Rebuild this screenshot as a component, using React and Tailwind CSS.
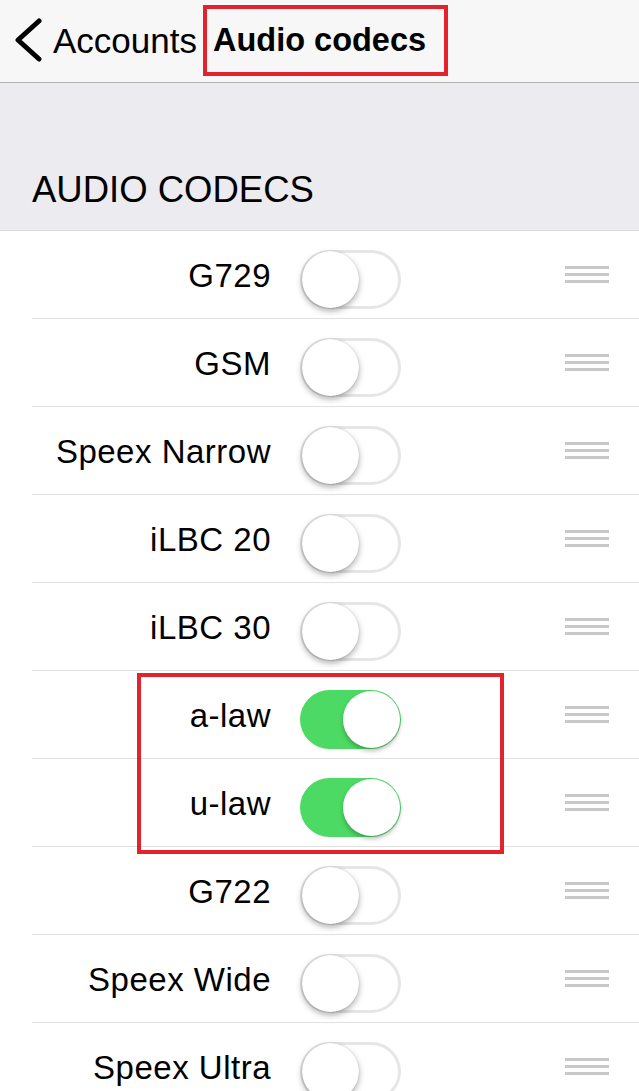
import React from 'react';

const codecs = [
  { name: 'G729', on: false },
  { name: 'GSM', on: false },
  { name: 'Speex Narrow', on: false },
  { name: 'iLBC 20', on: false },
  { name: 'iLBC 30', on: false },
  { name: 'a-law', on: true },
  { name: 'u-law', on: true },
  { name: 'G722', on: false },
  { name: 'Speex Wide', on: false },
  { name: 'Speex Ultra', on: false },
];

const Toggle = ({ on }) =>
  on ? (
    <div className="mt-[10px] w-[101px] h-[59px] rounded-full bg-[#4cd964] flex items-center justify-end pr-[1px] shrink-0">
      <div className="w-[57px] h-[57px] rounded-full bg-white shadow-[0_3px_4px_rgba(0,0,0,0.25)]" />
    </div>
  ) : (
    <div className="mt-[10px] w-[101px] h-[59px] rounded-full border-[3px] border-[#e6e6e6] bg-white flex items-center shrink-0">
      <div className="-ml-[1px] w-[57px] h-[57px] rounded-full bg-white shadow-[0_3px_6px_rgba(0,0,0,0.32),0_0_1px_rgba(0,0,0,0.25)]" />
    </div>
  );

const Handle = () => (
  <div className="w-[44px] flex flex-col gap-[4px] shrink-0">
    <div className="h-[3px] bg-[#c8c8c8]" />
    <div className="h-[3px] bg-[#c8c8c8]" />
    <div className="h-[3px] bg-[#c8c8c8]" />
  </div>
);

export default function App() {
  return (
    <div
      className="relative w-[639px] bg-white text-black"
      style={{ fontFamily: '"Liberation Sans", Arial, sans-serif' }}
    >
      {/* Nav bar */}
      <div className="h-[83px] bg-[#f7f7f7] border-b border-[#b2b2b2] flex items-center">
        <svg className="ml-[14px] mt-[-3px]" width="30" height="44" viewBox="0 0 30 44">
          <path d="M25 3L4 22l21 19" fill="none" stroke="#000" strokeWidth="5" strokeLinecap="round" strokeLinejoin="round" />
        </svg>
        <span className="ml-[9px] text-[35px] leading-none mt-[-2px]">Accounts</span>
        <span className="ml-[16px] text-[32.5px] font-bold leading-none mt-[-2px]">Audio codecs</span>
      </div>

      {/* Section header */}
      <div className="h-[148px] bg-[#ebebf0] border-b border-[#dcdcde] flex items-end pl-[32px] pb-[22px]">
        <span className="text-[36.5px] leading-[36px]">AUDIO CODECS</span>
      </div>

      {/* Codec rows */}
      <div>
        {codecs.map((c) => (
          <div key={c.name} className="pl-[32px]">
            <div className="h-[88px] border-b border-[#e0e0e0] flex items-center">
              <div className="w-[239px] mt-[2px] text-right text-[33px] tracking-[0.5px] leading-none shrink-0">
                {c.name}
              </div>
              <div className="ml-[29px]">
                <Toggle on={c.on} />
              </div>
              <div className="ml-auto mr-[30px]">
                <Handle />
              </div>
            </div>
          </div>
        ))}
      </div>

      {/* Annotation boxes */}
      <div className="absolute left-[203px] top-[5px] w-[245px] h-[71px] border-[4px] border-[#e2232b]" />
      <div className="absolute left-[137px] top-[673px] w-[367px] h-[181px] border-[4px] border-[#e2232b]" />
    </div>
  );
}
